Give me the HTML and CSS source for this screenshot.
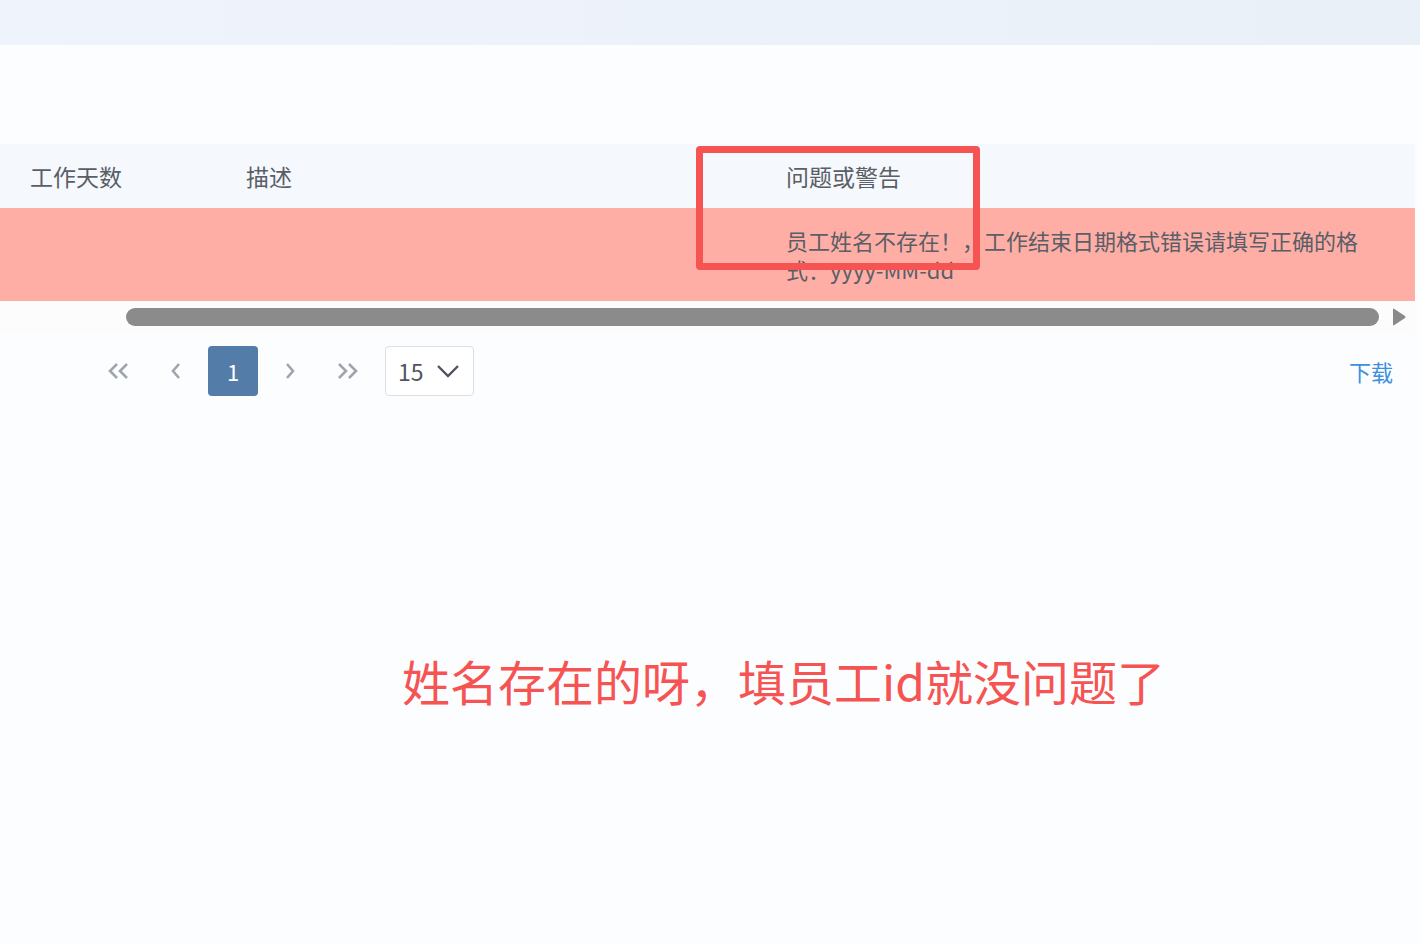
FILE: index.html
```html
<!DOCTYPE html>
<html lang="zh-CN">
<head>
<meta charset="utf-8">
<title>导入结果</title>
<link rel="stylesheet" href="styles.css">
</head>
<body>
<div class="topband"></div>
<div class="spacer"></div>
<div class="table-wrap">
  <div class="thead">
    <div class="col c1">工作天数</div>
    <div class="col c2">描述</div>
    <div class="col c3">问题或警告</div>
  </div>
  <div class="trow">
    <div class="col c1"></div>
    <div class="col c2"></div>
    <div class="col c3 cell-text">员工姓名不存在！，工作结束日期格式错误请填写正确的格式：yyyy-MM-dd</div>
  </div>
  <div class="hscroll">
    <div class="thumb"></div>
    <svg class="arrow" width="14" height="18" viewBox="0 0 14 18"><path d="M1 1.5 Q1 0 2.4 0.9 L13 8 Q14 9 13 10 L2.4 17.1 Q1 18 1 16.5 Z" fill="#8a8a8a"/></svg>
  </div>
  <div class="mark"></div>
</div>
<div class="pager">
  <div class="pbtn"><svg width="24" height="16" viewBox="0 0 24 16"><polyline points="10,1 3,8 10,15" fill="none" stroke="#9ea5ae" stroke-width="2.6"/><polyline points="20,1 13,8 20,15" fill="none" stroke="#9ea5ae" stroke-width="2.6"/></svg></div>
  <div class="pbtn"><svg width="12" height="16" viewBox="0 0 12 16"><polyline points="9,1 3,8 9,15" fill="none" stroke="#9ea5ae" stroke-width="2.6"/></svg></div>
  <div class="pbtn active">1</div>
  <div class="pbtn"><svg width="12" height="16" viewBox="0 0 12 16"><polyline points="3,1 9,8 3,15" fill="none" stroke="#9ea5ae" stroke-width="2.6"/></svg></div>
  <div class="pbtn"><svg width="24" height="16" viewBox="0 0 24 16"><polyline points="4,1 11,8 4,15" fill="none" stroke="#9ea5ae" stroke-width="2.6"/><polyline points="14,1 21,8 14,15" fill="none" stroke="#9ea5ae" stroke-width="2.6"/></svg></div>
  <div class="size-select"><span>15</span><svg width="22" height="14" viewBox="0 0 22 14"><polyline points="1,2 11,12 21,2" fill="none" stroke="#4f5560" stroke-width="2.4"/></svg></div>
  <div class="grow"></div>
  <a class="download">下载</a>
</div>
<div class="note">姓名存在的呀，填员工id就没问题了</div>
</body>
</html>
```
FILE: styles.css
```css
html, body {
  margin: 0;
  padding: 0;
  background: #fcfdfe;
  font-family: "Noto Sans CJK SC", "Noto Sans", sans-serif;
  color: #5a5e66;
}
.topband {
  height: 45px;
  background: linear-gradient(90deg, #eff3fb 0%, #ecf2fa 60%, #e9f0f8 100%);
}
.spacer {
  height: 99px;
}
.table-wrap {
  position: relative;
  width: 1415px;
}
.thead, .trow {
  display: flex;
}
.thead {
  height: 64px;
  background: #f5f8fc;
  align-items: center;
  font-size: 23px;
}
.trow {
  height: 93px;
  background: #ffaea6;
  align-items: center;
  font-size: 22px;
}
.col {
  box-sizing: border-box;
}
.c1 { width: 246px; padding-left: 30px; }
.c2 { width: 540px; }
.c3 { width: 590px; }
.cell-text {
  line-height: 29px;
  padding-top: 19px;
  align-self: flex-start;
  padding-top: 18px;
}
.hscroll {
  height: 32px;
  background: #fcfcfc;
  display: flex;
  align-items: center;
  padding-left: 126px;
}
.thumb {
  width: 1253px;
  height: 18px;
  border-radius: 9px;
  background: #8b8b8b;
}
.arrow {
  margin-left: 13px;
}
.mark {
  position: absolute;
  left: 696px;
  top: 2px;
  width: 284px;
  height: 124px;
  box-sizing: border-box;
  border: 7px solid #f65353;
  border-radius: 4px;
}
.pager {
  display: flex;
  align-items: center;
  height: 50px;
  margin-top: 13px;
  padding-left: 94px;
  padding-right: 27px;
  width: 1420px;
  box-sizing: border-box;
  gap: 7px;
}
.pbtn {
  width: 50px;
  height: 50px;
  display: flex;
  align-items: center;
  justify-content: center;
  border-radius: 4px;
  font-size: 22px;
}
.pbtn.active {
  background: #537ca8;
  color: #ffffff;
}
.size-select {
  margin-left: 6px;
  width: 89px;
  height: 50px;
  box-sizing: border-box;
  border: 1px solid #dcdfe4;
  border-radius: 4px;
  display: flex;
  align-items: center;
  padding-left: 12px;
  gap: 13px;
  font-size: 23px;
  color: #4f5560;
  background: #ffffff;
}
.grow { flex: 1; }
.download {
  color: #3d8fe0;
  font-size: 22px;
}
.note {
  margin-top: 250px;
  padding-left: 402px;
  font-size: 48px;
  color: #f65353;
  line-height: 68px;
}
```
